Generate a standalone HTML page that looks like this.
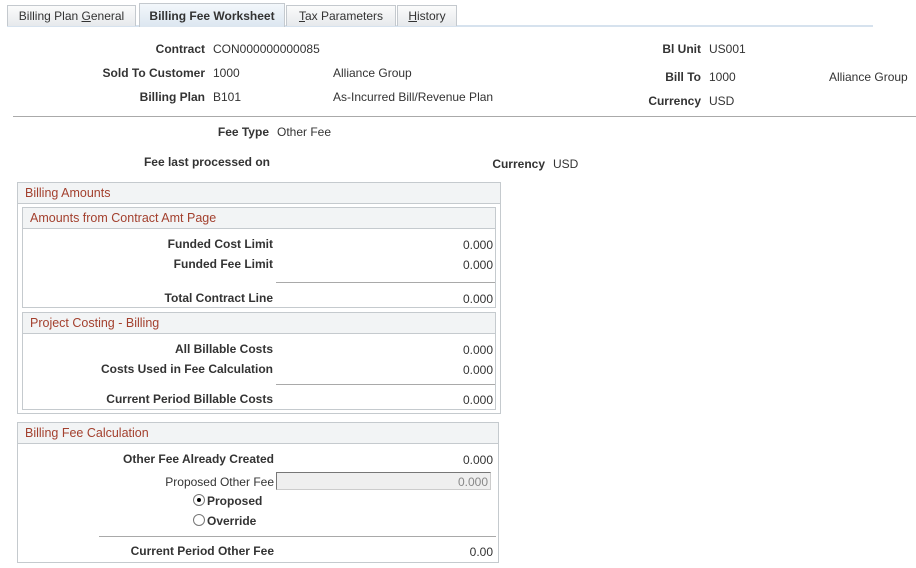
<!DOCTYPE html><html><head><style>
body{margin:0;width:916px;height:568px;background:#fff;font-family:"Liberation Sans",Arial,sans-serif;font-size:12px;color:#333;position:relative;overflow:hidden}
div,span{position:absolute;white-space:nowrap}
.l{font-weight:bold;text-align:right;line-height:14px;margin-top:1px}
.v{line-height:14px;margin-top:1px}
.n{line-height:14px;text-align:right;margin-top:1px}
.tab{top:5px;height:20px;border:1px solid #c4c9ce;border-bottom:none;background:linear-gradient(#fbfbfb,#e6e9ec);line-height:20px;text-align:center;color:#333;font-size:12px}
.box{border:1px solid #c5cace}
.hd{left:0;right:0;top:0;height:20px;background:#f2f4f5;border-bottom:1px solid #c5cace;color:#a3402e;line-height:21px;padding-left:7px;font-size:12.5px}
.hr{height:1px;background:#a9a9a9}
u{text-decoration:underline}
</style></head><body>
<div style="left:7px;top:25px;width:866px;height:2px;background:#d6e2ee"></div>
<div class="tab" style="left:7px;width:127px">Billing Plan <u>G</u>eneral</div>
<div class="tab" style="left:139px;width:144px;top:3px;height:23px;line-height:25px;background:linear-gradient(#f3f7fb,#dce6f0);font-weight:bold">Billing Fee Worksheet</div>
<div class="tab" style="left:286px;width:108px"><u>T</u>ax Parameters</div>
<div class="tab" style="left:397px;width:58px"><u>H</u>istory</div>

<div class="l" style="right:711px;top:41px">Contract</div><div class="v" style="left:213px;top:41px">CON000000000085</div>
<div class="l" style="right:711px;top:65px">Sold To Customer</div><div class="v" style="left:213px;top:65px">1000</div><div class="v" style="left:333px;top:65px">Alliance Group</div>
<div class="l" style="right:711px;top:89px">Billing Plan</div><div class="v" style="left:213px;top:89px">B101</div><div class="v" style="left:333px;top:89px">As-Incurred Bill/Revenue Plan</div>
<div class="l" style="right:215px;top:41px">Bl Unit</div><div class="v" style="left:709px;top:41px">US001</div>
<div class="l" style="right:215px;top:69px">Bill To</div><div class="v" style="left:709px;top:69px">1000</div><div class="v" style="left:829px;top:69px">Alliance Group</div>
<div class="l" style="right:215px;top:93px">Currency</div><div class="v" style="left:709px;top:93px">USD</div>
<div style="left:13px;top:116px;width:903px;height:1px;background:#aaa"></div>

<div class="l" style="right:647px;top:124px">Fee Type</div><div class="v" style="left:277px;top:124px">Other Fee</div>
<div class="l" style="right:646px;top:154px">Fee last processed on</div>
<div class="l" style="right:371px;top:156px">Currency</div><div class="v" style="left:553px;top:156px">USD</div>

<div class="box" style="left:17px;top:182px;width:482px;height:230px">
 <div class="hd">Billing Amounts</div>
 <div class="box" style="left:4px;top:24px;width:472px;height:99px">
  <div class="hd">Amounts from Contract Amt Page</div>
  <div class="l" style="right:222px;top:28px">Funded Cost Limit</div><div class="n" style="right:2px;top:29px">0.000</div>
  <div class="l" style="right:222px;top:48px">Funded Fee Limit</div><div class="n" style="right:2px;top:49px">0.000</div>
  <div class="hr" style="left:253px;width:219px;top:74px"></div>
  <div class="l" style="right:222px;top:82px">Total Contract Line</div><div class="n" style="right:2px;top:83px">0.000</div>
 </div>
 <div class="box" style="left:4px;top:129px;width:472px;height:96px">
  <div class="hd">Project Costing - Billing</div>
  <div class="l" style="right:222px;top:28px">All Billable Costs</div><div class="n" style="right:2px;top:29px">0.000</div>
  <div class="l" style="right:222px;top:48px">Costs Used in Fee Calculation</div><div class="n" style="right:2px;top:49px">0.000</div>
  <div class="hr" style="left:253px;width:219px;top:71px"></div>
  <div class="l" style="right:222px;top:78px">Current Period Billable Costs</div><div class="n" style="right:2px;top:79px">0.000</div>
 </div>
</div>

<div class="box" style="left:17px;top:422px;width:480px;height:139px">
 <div class="hd">Billing Fee Calculation</div>
 <div class="l" style="right:224px;top:28px">Other Fee Already Created</div><div class="n" style="right:5px;top:29px">0.000</div>
 <div class="l" style="right:224px;top:51px;font-weight:normal">Proposed Other Fee</div>
 <div style="left:258px;top:49px;height:18px;border:1px solid #777;border-right-color:#ccc;border-bottom-color:#ccc;background:#efefef;color:#888;text-align:right;line-height:18px;padding-right:2px;box-sizing:border-box;width:215px">0.000</div>
 <div style="left:175px;top:71px;width:10px;height:10px;border:1px solid #777;border-radius:50%;background:#fff"><div style="left:3px;top:3px;width:4px;height:4px;border-radius:50%;background:#000"></div></div>
 <div class="l" style="left:189px;top:70px;text-align:left">Proposed</div>
 <div style="left:175px;top:91px;width:10px;height:10px;border:1px solid #777;border-radius:50%;background:#fff"></div>
 <div class="l" style="left:189px;top:90px;text-align:left">Override</div>
 <div class="hr" style="left:81px;width:397px;top:113px"></div>
 <div class="l" style="right:224px;top:120px">Current Period Other Fee</div><div class="n" style="right:5px;top:121px">0.00</div>
</div>
</body></html>
